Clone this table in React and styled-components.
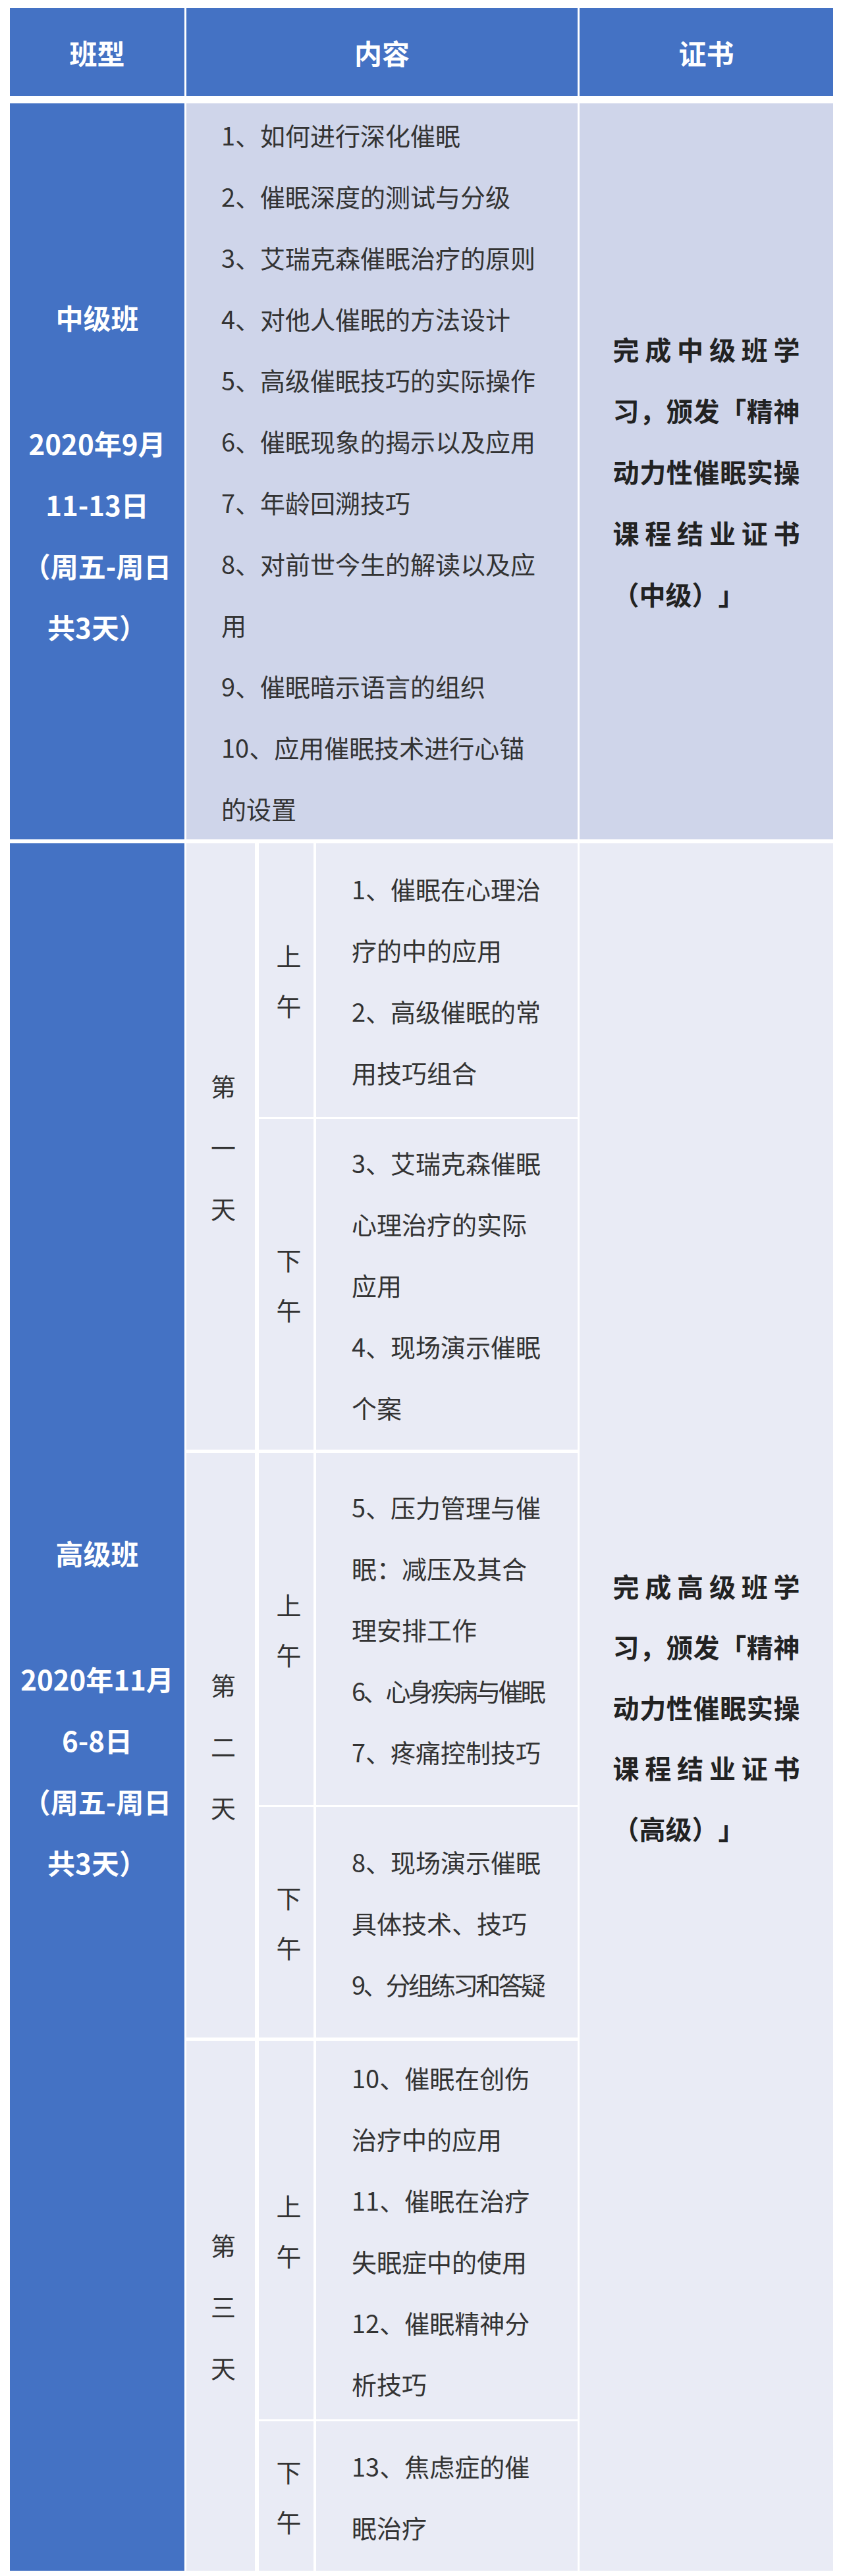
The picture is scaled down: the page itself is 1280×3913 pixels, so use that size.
import React from "react";
import styled, { createGlobalStyle } from "styled-components";

const BLUE = "#4472C4";
const BAND_DARK = "#CFD5EA";
const BAND_LIGHT = "#E9EBF5";

const GlobalStyle = createGlobalStyle`
  html, body { margin: 0; padding: 0; background: #fff; }
  body {
    font-family: "Noto Sans CJK SC", "Noto Sans", sans-serif;
    text-spacing-trim: space-all;
  }
  * { box-sizing: border-box; }
`;

const Page = styled.div`
  width: 1280px;
  padding: 12px 15px 8px;
  background: #fff;
`;

const Table = styled.div`
  display: flex;
  flex-direction: column;
`;

const GridRow = styled.div`
  display: grid;
  grid-template-columns: 265px 594px 385px;
  column-gap: 3px;
  background: #fff;
`;

const HeaderRow = styled(GridRow)`
  height: 134px;
  margin-bottom: 11px;
`;

const CourseRow = styled(GridRow)`
  & + & {
    margin-top: 6px;
  }
`;

const HeaderCell = styled.div`
  background: ${BLUE};
  color: #fff;
  font-size: 42px;
  font-weight: 700;
  display: flex;
  align-items: center;
  justify-content: center;
`;

const LabelCell = styled.div`
  background: ${BLUE};
  color: #fff;
  font-size: 42px;
  font-weight: 700;
  line-height: 93px;
  display: flex;
  flex-direction: column;
  align-items: center;
  justify-content: center;
  text-align: center;
`;

const ClassName = styled.div`
  margin-bottom: 98px;
`;

const ScheduleLine = styled.div`
  white-space: nowrap;
`;

const TopicList = styled.div`
  background: ${BAND_DARK};
  padding: 1px 0 1px 53px;
`;

const Topic = styled.p`
  margin: 0;
  width: ${(p) => p.$width};
  font-size: 38px;
  line-height: ${(p) => p.$lh || 93}px;
  color: #333;
  letter-spacing: ${(p) => (p.$tight ? "-0.1em" : "normal")};
`;

const CertCell = styled.div`
  background: ${(p) => p.$bg};
  display: flex;
  align-items: center;
  justify-content: center;
`;

const CertText = styled.p`
  margin: 0;
  width: 7.1em;
  font-size: 40px;
  font-weight: 700;
  line-height: ${(p) => p.$lh}px;
  color: #222;
  text-align: justify;
`;

const Schedule = styled.div`
  display: flex;
  flex-direction: column;
  gap: 5px;
  background: #fff;
`;

const Day = styled.div`
  display: grid;
  grid-template-columns: 104px 1fr;
  column-gap: 6px;
`;

const StackCell = styled.div`
  background: ${BAND_LIGHT};
  display: flex;
  align-items: center;
  justify-content: center;
  padding-left: 8px;
`;

const StackText = styled.div`
  width: 1em;
  font-size: 38px;
  line-height: ${(p) => p.$lh}px;
  color: #333;
  text-align: center;
`;

const Periods = styled.div`
  display: flex;
  flex-direction: column;
  gap: 3px;
`;

const Period = styled.div`
  display: grid;
  grid-template-columns: 83px 1fr;
  column-gap: 4px;
`;

const ItemsCell = styled.div`
  background: ${BAND_LIGHT};
  display: flex;
  flex-direction: column;
  justify-content: center;
  padding-left: 54px;
`;

const intermediate = {
  name: "中级班",
  schedule: ["2020年9月", "11-13日", "（周五-周日", "共3天）"],
  topics: [
    "1、如何进行深化催眠",
    "2、催眠深度的测试与分级",
    "3、艾瑞克森催眠治疗的原则",
    "4、对他人催眠的方法设计",
    "5、高级催眠技巧的实际操作",
    "6、催眠现象的揭示以及应用",
    "7、年龄回溯技巧",
    "8、对前世今生的解读以及应用",
    "9、催眠暗示语言的组织",
    "10、应用催眠技术进行心锚的设置",
  ],
  cert: "完成中级班学习，颁发「精神动力性催眠实操课程结业证书（中级）」",
};

const advanced = {
  name: "高级班",
  schedule: ["2020年11月", "6-8日", "（周五-周日", "共3天）"],
  days: [
    {
      label: "第一天",
      periods: [
        { label: "上午", h: 416, items: ["1、催眠在心理治疗的中的应用", "2、高级催眠的常用技巧组合"] },
        { label: "下午", h: 502, items: ["3、艾瑞克森催眠心理治疗的实际应用", "4、现场演示催眠个案"] },
      ],
    },
    {
      label: "第二天",
      periods: [
        {
          label: "上午",
          h: 535,
          items: [
            "5、压力管理与催眠：减压及其合理安排工作",
            { text: "6、心身疾病与催眠", tight: true },
            "7、疼痛控制技巧",
          ],
        },
        {
          label: "下午",
          h: 350,
          items: ["8、现场演示催眠具体技术、技巧", { text: "9、分组练习和答疑", tight: true }],
        },
      ],
    },
    {
      label: "第三天",
      periods: [
        {
          label: "上午",
          h: 575,
          items: ["10、催眠在创伤治疗中的应用", "11、催眠在治疗失眠症中的使用", "12、催眠精神分析技巧"],
        },
        { label: "下午", h: 227, items: ["13、焦虑症的催眠治疗"] },
      ],
    },
  ],
  cert: "完成高级班学习，颁发「精神动力性催眠实操课程结业证书（高级）」",
};

function ClassLabel({ course }) {
  return (
    <LabelCell>
      <ClassName>{course.name}</ClassName>
      {course.schedule.map((line) => (
        <ScheduleLine key={line}>{line}</ScheduleLine>
      ))}
    </LabelCell>
  );
}

function DayBlock({ day }) {
  return (
    <Day>
      <StackCell>
        <StackText $lh={93}>{day.label}</StackText>
      </StackCell>
      <Periods>
        {day.periods.map((period) => (
          <Period key={period.label} style={{ height: period.h }}>
            <StackCell>
              <StackText $lh={76}>{period.label}</StackText>
            </StackCell>
            <ItemsCell>
              {period.items.map((item) => {
                const text = typeof item === "string" ? item : item.text;
                const tight = typeof item === "string" ? false : item.tight;
                return (
                  <Topic key={text} $width="7.8em" $tight={tight}>
                    {text}
                  </Topic>
                );
              })}
            </ItemsCell>
          </Period>
        ))}
      </Periods>
    </Day>
  );
}

export default function App() {
  return (
    <>
      <GlobalStyle />
      <Page>
        <Table>
          <HeaderRow>
            <HeaderCell>班型</HeaderCell>
            <HeaderCell>内容</HeaderCell>
            <HeaderCell>证书</HeaderCell>
          </HeaderRow>

          <CourseRow>
            <ClassLabel course={intermediate} />
            <TopicList>
              {intermediate.topics.map((t) => (
                <Topic key={t} $width="12.8em">
                  {t}
                </Topic>
              ))}
            </TopicList>
            <CertCell $bg={BAND_DARK}>
              <CertText $lh={93}>{intermediate.cert}</CertText>
            </CertCell>
          </CourseRow>

          <CourseRow>
            <ClassLabel course={advanced} />
            <Schedule>
              {advanced.days.map((day) => (
                <DayBlock key={day.label} day={day} />
              ))}
            </Schedule>
            <CertCell $bg={BAND_LIGHT}>
              <CertText $lh={92}>{advanced.cert}</CertText>
            </CertCell>
          </CourseRow>
        </Table>
      </Page>
    </>
  );
}
